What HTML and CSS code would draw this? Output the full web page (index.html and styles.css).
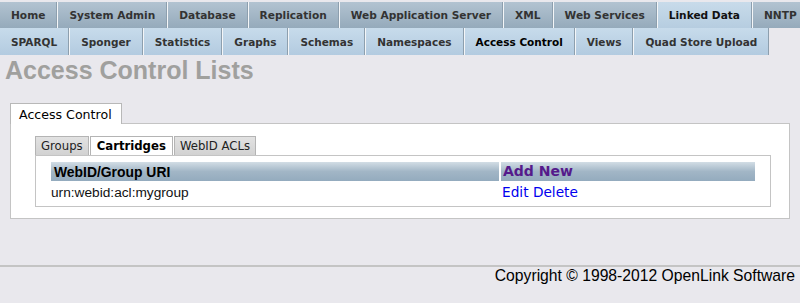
FILE: index.html
```html
<!DOCTYPE html>
<html>
<head>
<meta charset="utf-8">
<link rel="stylesheet" href="styles.css">
</head>
<body>
<div class="nav1">
  <span class="t1">Home</span>
  <span class="t1">System Admin</span>
  <span class="t1">Database</span>
  <span class="t1">Replication</span>
  <span class="t1">Web Application Server</span>
  <span class="t1">XML</span>
  <span class="t1">Web Services</span>
  <span class="t1 on">Linked Data</span>
  <span class="t1">NNTP</span>
</div>
<div class="nav2">
  <span class="t2">SPARQL</span>
  <span class="t2">Sponger</span>
  <span class="t2">Statistics</span>
  <span class="t2">Graphs</span>
  <span class="t2">Schemas</span>
  <span class="t2">Namespaces</span>
  <span class="t2 on">Access Control</span>
  <span class="t2">Views</span>
  <span class="t2">Quad Store Upload</span>
</div>
<h1 class="title">Access Control Lists</h1>
<div class="outer">
  <div class="otabs"><span class="otab">Access Control</span></div>
  <div class="opanel">
    <div class="itabs">
      <span class="itab">Groups</span>
      <span class="itab on">Cartridges</span>
      <span class="itab">WebID ACLs</span>
    </div>
    <div class="ipanel">
      <table class="grid">
        <tr><th class="c1">WebID/Group URI</th><th class="c2"><a class="add">Add New</a></th></tr>
        <tr><td class="c1">urn:webid:acl:mygroup</td><td class="c2"><a class="lnk">Edit</a> <a class="lnk">Delete</a></td></tr>
      </table>
    </div>
  </div>
</div>
<div class="footer">Copyright © 1998-2012 OpenLink Software</div>
</body>
</html>
```
FILE: styles.css
```css
html, body { margin: 0; padding: 0; }
body { background: #e9e8ed; font-family: "DejaVu Sans", Verdana, sans-serif; width: 800px; overflow: hidden; }
.nav1 { display: flex; height: 28px; white-space: nowrap; }
.t1 { box-sizing: border-box; height: 26px; margin-top: 2px; padding: 1px 11px 0; font-size: 10.6px; font-weight: bold; color: #333; line-height: 25px; background: linear-gradient(#b2c3d1, #95aabb); border-left: 1px solid #f4f6f8; border-right: 1px solid #8d9fae; flex: none; }
.t1:first-child { border-left: none; }
.t1.on { background: linear-gradient(#c8dbea, #b6cde0); color: #111; }
.nav2 { display: flex; height: 27px; white-space: nowrap; }
.t2 { box-sizing: border-box; height: 27px; padding: 1px 11px 0; font-size: 10.5px; font-weight: bold; color: #333; line-height: 26px; background: linear-gradient(#c7dbeb, #b3cbe0); border-left: 1px solid #f4f6f8; border-right: 1px solid #8d9fae; flex: none; }
.t2:first-child { border-left: none; }
.t2.on { color: #000; }
.title { margin: 1px 0 0 5px; font-family: "Liberation Sans", Arial, sans-serif; font-size: 25px; font-weight: bold; color: #a0a09e; line-height: 28px; }
.outer { margin: 19px 10px 0 10px; }
.otabs { display: flex; }
.otab { background: #fff; border: 1px solid #b8b8b8; border-bottom: none; padding: 0 9px 0 8px; height: 20px; line-height: 21px; font-size: 12.6px; color: #000; margin-bottom: -1px; position: relative; }
.opanel { background: #fff; border: 1px solid #c4c4c4; padding: 12px 18px 11px 24px; }
.itabs { display: flex; }
.itab { background: linear-gradient(#e2e2e2, #d2d2d2); border: 1px solid #b4b4b4; border-bottom: none; padding: 0 5px; height: 18px; line-height: 19px; font-size: 11.7px; color: #222; margin-right: 1px; }
.itab.on { background: #fff; font-weight: bold; color: #000; padding: 0 6px; }
.ipanel { border: 1px solid #c4c4c4; padding: 6px 13px 3px 15px; }
.grid { border-collapse: separate; border-spacing: 2px 0; width: 708px; margin-left: -2px; }
.grid th { background: linear-gradient(#d2dde5, #a2b6c6 50%, #94abbe); text-align: left; height: 18px; padding: 0 3px; font-size: 13px; line-height: 18px; }
.grid th.c1 { font-family: "Liberation Sans", Arial, sans-serif; font-size: 13.9px; width: 442px; color: #000; }
.grid th.c2 { padding-left: 2px; }
.grid td { height: 22px; padding: 0 1px; font-size: 13.7px; vertical-align: middle; }
.grid td.c1 { font-family: "Liberation Sans", Arial, sans-serif; color: #111; padding-left: 0; }
.add { color: #551a8b; font-weight: bold; font-size: 14px; }
.lnk { color: #0000ee; font-size: 13.7px; }
.footer { margin-top: 46px; border-top: 2px solid #c4c4c4; text-align: right; padding: 0 5px 0 0; font-family: "Liberation Sans", Arial, sans-serif; font-size: 15.7px; line-height: 17px; color: #000; }
```
